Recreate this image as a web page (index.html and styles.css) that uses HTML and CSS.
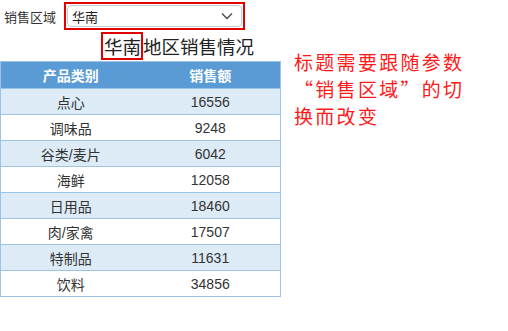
FILE: index.html
```html
<!DOCTYPE html>
<html lang="zh-CN">
<head>
<meta charset="utf-8">
<link rel="stylesheet" href="styles.css">
</head>
<body>
<div class="page">
  <div class="left">
    <div class="filter">
      <span class="filter-label">销售区域</span>
      <div class="select-mark">
        <div class="select">
          <span class="select-value">华南</span>
          <svg class="chevron" width="12" height="8" viewBox="0 0 12 8"><polyline points="1,1.5 6,6.5 11,1.5" fill="none" stroke="#444" stroke-width="1.3"/></svg>
        </div>
      </div>
    </div>
    <div class="title"><span class="title-mark">华南</span>地区销售情况</div>
    <table class="data">
      <thead>
        <tr><th>产品类别</th><th>销售额</th></tr>
      </thead>
      <tbody>
        <tr><td>点心</td><td>16556</td></tr>
        <tr><td>调味品</td><td>9248</td></tr>
        <tr><td>谷类/麦片</td><td>6042</td></tr>
        <tr><td>海鲜</td><td>12058</td></tr>
        <tr><td>日用品</td><td>18460</td></tr>
        <tr><td>肉/家禽</td><td>17507</td></tr>
        <tr><td>特制品</td><td>11631</td></tr>
        <tr><td>饮料</td><td>34856</td></tr>
      </tbody>
    </table>
  </div>
  <p class="note">标题需要跟随参数“销售区域”的切换而改变</p>
</div>
</body>
</html>
```
FILE: styles.css
```css
html, body {
  margin: 0;
  padding: 0;
  background: #fff;
}
body {
  font-family: "Liberation Sans", "Noto Sans CJK SC", sans-serif;
  color: #333;
}
.page {
  display: flex;
  align-items: flex-start;
}
.left {
  width: 281px;
  display: flex;
  flex-direction: column;
}
.filter {
  display: flex;
  align-items: center;
  height: 32px;
  padding-left: 4px;
}
.filter-label {
  font-size: 13px;
  width: 60px;
}
.select-mark {
  border: 2px solid #e00000;
  padding: 1px;
}
.select {
  width: 175px;
  height: 22px;
  border: 1px solid #c8c8c8;
  border-radius: 4px;
  display: flex;
  align-items: center;
  justify-content: space-between;
  padding: 0 8px 0 4px;
  box-sizing: border-box;
}
.select-value {
  font-size: 13px;
  color: #222;
}
.chevron {
  display: block;
}
.title {
  font-family: "Noto Sans CJK SC", sans-serif;
  font-size: 18.5px;
  line-height: 26px;
  color: #222;
  padding-left: 101px;
  height: 29px;
}
.title-mark {
  display: inline-block;
  border: 2px solid #e00000;
  padding: 0 0 0 1px;
  line-height: 24px;
}
.data {
  border-collapse: collapse;
  width: 281px;
  border: 1px solid #9dc3e6;
  font-size: 14px;
}
.data th {
  background: #5b9bd5;
  color: #fff;
  font-weight: bold;
  height: 26px;
  padding: 0;
  width: 50%;
  border-bottom: 1px solid #9dc3e6;
}
.data td {
  height: 25px;
  padding: 0;
  text-align: center;
  border-bottom: 1px solid #9dc3e6;
  color: #333;
}
.data tbody tr:nth-child(odd) td {
  background: #ddebf7;
}
.note {
  margin: 48px 0 0 13px;
  width: 180px;
  font-family: "Noto Sans CJK SC", sans-serif;
  font-size: 19px;
  letter-spacing: 2.3px;
  line-height: 27px;
  color: #ff1a1a;
}
```
